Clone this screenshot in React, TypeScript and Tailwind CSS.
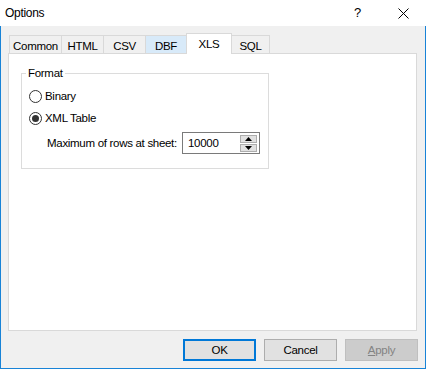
import React from "react";

const font = { fontFamily: '"Liberation Sans", Arial, sans-serif', letterSpacing: "-0.3px" };

function Tab({ label, w, active, hover }: { label: string; w: string; active?: boolean; hover?: boolean }) {
  if (active) {
    return (
      <div className={`${w} h-[21px] -ml-px -mb-px relative z-10 bg-white border border-b-0 border-[#d9d9d9] flex justify-center pt-[2px] text-[11.5px] leading-[16px] whitespace-nowrap`}>
        {label}
      </div>
    );
  }
  return (
    <div
      className={`${w} h-[18px] -ml-px first:ml-0 border border-b-0 border-[#d9d9d9] ${hover ? "bg-[#d8eaf9]" : "bg-[#f0f0f0]"} flex justify-center items-center pt-[2px] text-[11.5px] leading-[16px] whitespace-nowrap`}
    >
      {label}
    </div>
  );
}

function Radio({ checked, label }: { checked?: boolean; label: string }) {
  return (
    <div className="flex items-center h-[16px]">
      <div className="w-[13px] h-[13px] rounded-full border border-[#333333] bg-white flex items-center justify-center">
        {checked && <div className="w-[7px] h-[7px] rounded-full bg-[#333333]" />}
      </div>
      <span className="ml-[3px] text-[11.5px] leading-[16px] whitespace-nowrap">{label}</span>
    </div>
  );
}

export default function App() {
  return (
    <div className="w-[426px] h-[369px] flex flex-col text-black" style={font}>
      <div className="h-[26px] bg-white flex items-center pl-[5px] shrink-0">
        <span className="text-[12px] leading-[16px]">Options</span>
        <span className="ml-auto mr-[37px] text-[13px] leading-[16px]">?</span>
        <svg width="11" height="11" viewBox="0 0 11 11" className="mr-[17px]">
          <path d="M0.5 0.5 L10.5 10.5 M10.5 0.5 L0.5 10.5" stroke="#000" strokeWidth="1" />
        </svg>
      </div>
      <div className="flex-1 bg-[#f0f0f0] border-x border-b border-[#1883d7] flex flex-col pl-[7px] pt-[7px]">
        <div className="flex items-end h-[20px] ml-[1px]">
          <Tab label="Common" w="w-[53px]" />
          <Tab label="HTML" w="w-[43px]" />
          <Tab label="CSV" w="w-[43px]" />
          <Tab label="DBF" w="w-[42px]" hover />
          <Tab label="XLS" w="w-[46px]" active />
          <Tab label="SQL" w="w-[39px]" />
        </div>
        <div className="w-[409px] h-[278px] bg-white border border-[#d9d9d9] pl-[12px] pt-[11px]">
          <fieldset className="w-[248px] h-[104px] border border-[#dcdcdc]">
            <legend className="ml-[4px] px-[2px] text-[11.5px] leading-[16px]">Format</legend>
            <div className="pl-[7px]">
              <div className="flex flex-col gap-[6px] mt-[7px]">
                <Radio label="Binary" />
                <Radio label="XML Table" checked />
              </div>
              <div className="flex items-center mt-[6px] ml-[18px]">
                <span className="text-[11.5px] leading-[16px] whitespace-nowrap w-[129px]">Maximum of rows at sheet:</span>
                <div className="ml-[6px] w-[78px] h-[22px] border border-[#7a7a7a] bg-white flex items-center shrink-0">
                  <span className="ml-[5px] text-[11.5px] leading-[16px]">10000</span>
                  <div className="ml-auto mr-[2px] flex flex-col gap-[1px]">
                    <div className="w-[17px] h-[8px] bg-[#e1e1e1] border border-[#adadad] flex items-center justify-center">
                      <svg width="7" height="4" viewBox="0 0 7 4"><path d="M3.5 0 L7 4 L0 4 Z" fill="#000" /></svg>
                    </div>
                    <div className="w-[17px] h-[8px] bg-[#e1e1e1] border border-[#adadad] flex items-center justify-center">
                      <svg width="7" height="4" viewBox="0 0 7 4"><path d="M0 0 L7 0 L3.5 4 Z" fill="#000" /></svg>
                    </div>
                  </div>
                </div>
              </div>
            </div>
          </fieldset>
        </div>
        <div className="flex justify-end gap-[8px] mt-[8px] pr-[7px]">
          <div className="w-[73px] h-[22px] border-2 border-[#0078d7] bg-[#e1e1e1] flex items-center justify-center text-[11.5px] leading-[16px]">OK</div>
          <div className="w-[73px] h-[22px] border border-[#adadad] bg-[#e1e1e1] flex items-center justify-center text-[11.5px] leading-[16px]">Cancel</div>
          <div className="w-[73px] h-[22px] border border-[#bfbfbf] bg-[#cccccc] flex items-center justify-center text-[11.5px] leading-[16px] text-[#838383]">
            <span><span className="underline">A</span>pply</span>
          </div>
        </div>
      </div>
    </div>
  );
}
